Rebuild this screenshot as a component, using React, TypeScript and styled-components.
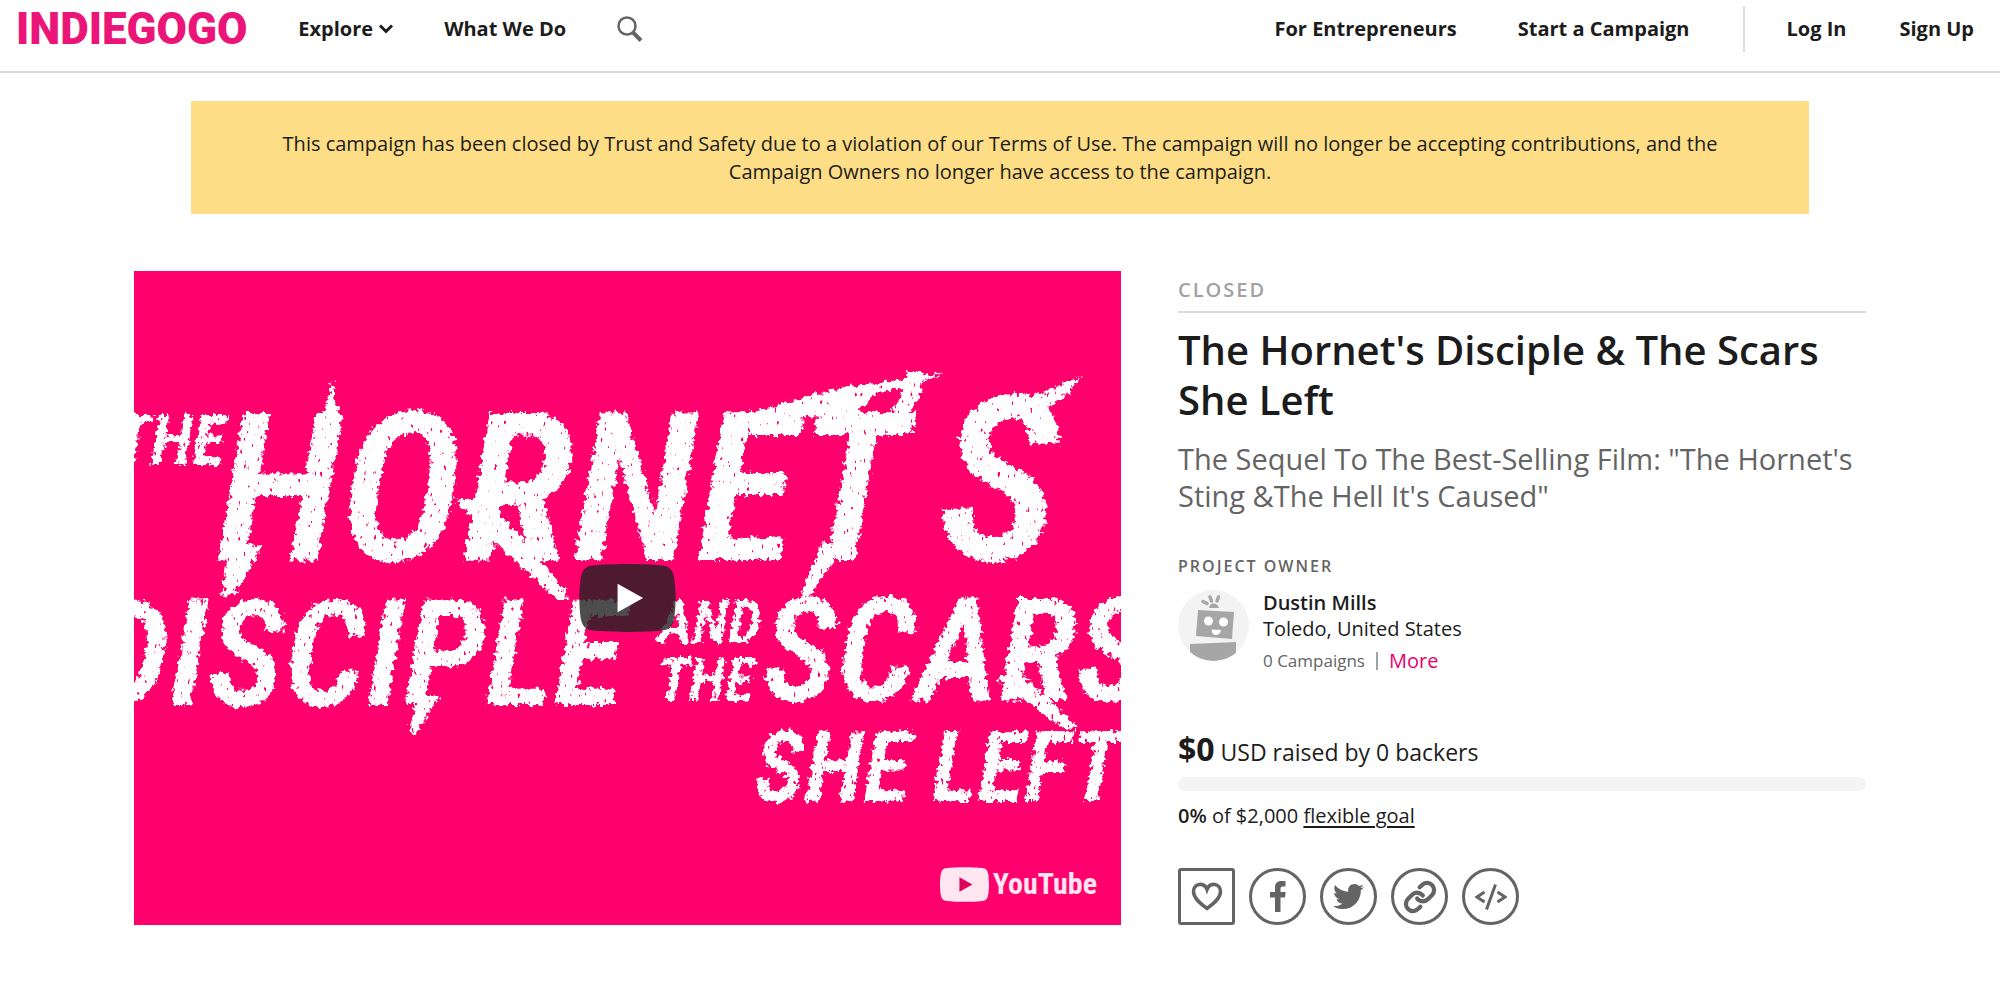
import React from "react";
import styled, { createGlobalStyle, css } from "styled-components";
import { FaTwitter } from "react-icons/fa";
import { Link as LinkIcon } from "lucide-react";

const ink = "#1c1c1c";
const grey = "#646464";
const pink = "#eb1478";
const hotPink = "#ff006c";
const rule = "#dcdcdc";

const GlobalStyle = createGlobalStyle`
  *, *::before, *::after { box-sizing: border-box; }
  body {
    margin: 0;
    background: #fff;
    color: ${ink};
    font-family: "Open Sans", "Noto Sans", sans-serif;
    font-size: 20px;
    line-height: 28px;
  }
  h1, h2, p { margin: 0; font-weight: 400; }
`;

const Header = styled.header`
  display: flex;
  align-items: center;
  justify-content: space-between;
  padding: 0 26px 13px 16px;
  min-height: 73px;
  border-bottom: 2px solid ${rule};
`;

const NavGroup = styled.nav<{ $gap: number }>`
  display: flex;
  align-items: center;
  gap: ${(p) => p.$gap}px;
`;

const Logo = styled.a`
  color: ${pink};
  font: 900 44px/58px Roboto, sans-serif;
  text-decoration: none;
`;

const navItem = css`
  display: flex;
  align-items: center;
  gap: 6px;
  padding: 0;
  border: 0;
  background: none;
  color: ${ink};
  font: inherit;
  font-weight: 700;
  text-decoration: none;
  white-space: nowrap;
`;

const NavLink = styled.a`
  ${navItem}
`;

const NavButton = styled.button`
  ${navItem}
  cursor: pointer;
`;

const Account = styled(NavGroup)`
  min-height: 46px;
  padding-left: 42px;
  border-left: 2px solid ${rule};
`;

const Notice = styled.p`
  width: calc(100% - 48px);
  max-width: 1618px;
  margin: 28px auto 0;
  padding: 29px 60px 28px;
  background: #fddd85;
  text-align: center;
`;

const Campaign = styled.main`
  display: grid;
  grid-template-columns: minmax(0, 987fr) minmax(0, 688fr);
  gap: 57px;
  width: calc(100% - 48px);
  max-width: 1732px;
  margin: 57px auto 56px;
  align-items: start;
`;

const Video = styled.section`
  position: relative;
  aspect-ratio: 987 / 654;
  overflow: hidden;
  background: ${hotPink};
`;

const Artwork = styled.svg`
  display: block;
  width: 100%;
  height: 100%;
  fill: #fff;
  font-family: "Roboto Condensed", "Open Sans Condensed", Roboto, sans-serif;
  font-style: italic;
  font-weight: 600;
`;

const Overlay = styled.div`
  position: absolute;
  inset: 0;
  display: flex;
  align-items: center;
  justify-content: center;
`;

const PlayButton = styled.button`
  width: 97px;
  height: 68px;
  padding: 0;
  border: 0;
  background: none;
  cursor: pointer;
`;

const YouTubeLink = styled.a`
  position: absolute;
  right: 24px;
  bottom: 22px;
  display: flex;
  align-items: center;
  gap: 4px;
  color: #ffe6f0;
  font: 700 30px/38px "Roboto Condensed", Roboto, sans-serif;
  text-decoration: none;
`;

const Status = styled.p`
  padding: 5px 0 7px;
  border-bottom: 2px solid ${rule};
  color: #a2a2a2;
  font-weight: 600;
  letter-spacing: 2px;
`;

const Title = styled.h1`
  margin-top: 12px;
  font-size: 40px;
  font-weight: 600;
  line-height: 50px;
`;

const Tagline = styled.h2`
  margin-top: 15px;
  color: ${grey};
  font-size: 29px;
  font-weight: 400;
  line-height: 37px;
`;

const OwnerHeading = styled.p`
  margin-top: 38px;
  color: ${grey};
  font-size: 16px;
  font-weight: 600;
  letter-spacing: 2px;
`;

const Owner = styled.div`
  display: flex;
  gap: 14px;
  margin-top: 10px;
`;

const OwnerName = styled.p`
  font-weight: 600;
  line-height: 26px;
`;

const Place = styled.p`
  line-height: 26px;
`;

const OwnerMeta = styled.p`
  display: flex;
  align-items: center;
  gap: 11px;
  margin-top: 5px;
  color: ${grey};
  font-size: 17px;
`;

const Bar = styled.span`
  width: 2px;
  height: 18px;
  background: #a2a2a2;
`;

const MoreLink = styled.a`
  color: #e6006e;
  font-size: 20px;
  text-decoration: none;
`;

const Raised = styled.p`
  margin-top: 54px;
  font-size: 23px;
  line-height: 40px;
`;

const Amount = styled.strong`
  font-size: 32px;
  font-weight: 700;
`;

const Meter = styled.div`
  height: 14px;
  margin-top: 5px;
  border-radius: 7px;
  background: #f4f4f4;
`;

const Goal = styled.p`
  margin-top: 11px;

  a { color: inherit; text-underline-offset: 3px; }
  strong { font-weight: 600; }
`;

const Actions = styled.div`
  display: flex;
  gap: 14px;
  margin-top: 38px;
`;

const ActionButton = styled.button<{ $square?: boolean }>`
  display: flex;
  align-items: center;
  justify-content: center;
  width: 57px;
  height: 57px;
  padding: 0;
  border: 3px solid ${grey};
  border-radius: ${(p) => (p.$square ? "3px" : "50%")};
  background: #fff;
  color: ${grey};
  cursor: pointer;
`;

const badge =
  "M66.52 7.74c-.78-2.93-2.49-5.41-5.42-6.19C55.79.13 34 0 34 0S12.21.13 6.9 1.55C3.97 2.33 2.27 4.81 1.48 7.74.06 13.05 0 24 0 24s.06 10.95 1.48 16.26c.78 2.93 2.49 5.41 5.42 6.19C12.21 47.87 34 48 34 48s21.79-.13 27.1-1.55c2.93-.78 4.64-3.26 5.42-6.19C67.94 34.95 68 24 68 24s-.06-10.95-1.48-16.26z";

const words = [
  { text: "THE", x: -20, y: 194, size: 70 },
  { text: "HORNET", x: 82, y: 289, size: 208 },
  { text: "’", x: 746, y: 236, size: 180 },
  { text: "S", x: 804, y: 289, size: 232 },
  { text: "DISCIPLE", x: -46, y: 434, size: 148 },
  { text: "AND", x: 524, y: 372, size: 60 },
  { text: "THE", x: 524, y: 430, size: 60 },
  { text: "SCARS", x: 628, y: 430, size: 144 },
  { text: "SHE", x: 620, y: 530, size: 98 },
  { text: "LEFT", x: 798, y: 530, size: 98 },
];

/* Dry-brush tails that run out of the lettering. */
const tails = [
  "M95 270 L128 275 L102 322 L88 325 Z",
  "M322 230 L350 225 L400 280 L436 328 L424 328 L375 285 Z",
  "M688 270 L712 274 L674 326 L666 326 Z",
  "M610 144 L700 118 L812 102 L775 114 L740 124 L720 146 Z",
  "M186 158 L198 110 L208 158 Z",
  "M880 134 L949 104 L934 122 L896 150 Z",
  "M284 425 L306 425 L280 464 L275 458 Z",
  "M862 408 L884 400 L933 446 L944 456 L930 458 Z",
];

function Thumbnail() {
  return (
    <Artwork viewBox="0 0 987 654" preserveAspectRatio="xMidYMid slice">
      <defs>
        <filter id="brush" x="-5%" y="-5%" width="110%" height="110%">
          <feTurbulence type="fractalNoise" baseFrequency="0.2" numOctaves="3" seed="7" result="edge" />
          <feDisplacementMap in="SourceGraphic" in2="edge" scale="10" xChannelSelector="R" yChannelSelector="G" result="rough" />
          <feTurbulence type="fractalNoise" baseFrequency="0.3 0.14" numOctaves="2" seed="3" result="grain" />
          <feColorMatrix in="grain" type="matrix" values="0 0 0 0 1  0 0 0 0 1  0 0 0 0 1  0 0 0 -14 11" result="holes" />
          <feComposite in="rough" in2="holes" operator="in" />
        </filter>
      </defs>
      <g filter="url(#brush)">
        {words.map((w, i) => (
          <text key={i} x={w.x} y={w.y} fontSize={w.size}>{w.text}</text>
        ))}
        {tails.map((d) => <path key={d} d={d} />)}
      </g>
    </Artwork>
  );
}

function Robot() {
  return (
    <svg width="71" height="71" viewBox="0 0 71 71" aria-hidden="true">
      <defs><clipPath id="disc"><circle cx="35.500" cy="35.500" r="35.500" /></clipPath></defs>
      <g clipPath="url(#disc)">
        <rect width="71" height="71" fill="#f3f3f3" />
        <g fill="#a6a6a6">
          <path d="M20 20 L56 22 L54 49 L18 46 Z" />
          <path d="M12 54 L58 52 V71 H12 Z" />
          <path d="M31 18 Q32 13 36 13.500 Q40 14 41 18 Z" />
        </g>
        <g stroke="#a6a6a6" strokeWidth="3.500" strokeLinecap="round">
          <path d="M25 11.500 L29 13.500 M32 7 L33.500 11 M40.500 7 L39 11" />
        </g>
        <g fill="#fff">
          <circle cx="30.500" cy="31" r="4.500" />
          <circle cx="45.500" cy="32" r="4.500" />
          <path d="M33.500 39.500 L43 40 Q42 45 38 45 Q34 45 33.500 39.500 Z" />
        </g>
      </g>
    </svg>
  );
}

export default function App() {
  return (
    <>
      <GlobalStyle />
      <Header>
        <NavGroup $gap={51}>
          <Logo href="#">INDIEGOGO</Logo>
          <NavButton type="button">
            Explore
            <svg width="14" height="10" viewBox="0 0 14 10" fill="none" stroke="currentColor" strokeWidth="3" aria-hidden="true">
              <path d="M1 1.500 L7 7.500 L13 1.500" />
            </svg>
          </NavButton>
          <NavLink href="#">What We Do</NavLink>
          <NavButton type="button" aria-label="Search">
            <svg width="26" height="26" viewBox="0 0 26 26" fill="none" stroke={grey} aria-hidden="true">
              <circle cx="10" cy="10" r="8.500" strokeWidth="2.500" />
              <path d="M16 16.500 L24 24.500" strokeWidth="4" />
            </svg>
          </NavButton>
        </NavGroup>
        <NavGroup $gap={53}>
          <NavGroup as="div" $gap={61}>
            <NavLink href="#">For Entrepreneurs</NavLink>
            <NavLink href="#">Start a Campaign</NavLink>
          </NavGroup>
          <Account as="div" $gap={53}>
            <NavLink href="#">Log In</NavLink>
            <NavLink href="#">Sign Up</NavLink>
          </Account>
        </NavGroup>
      </Header>

      <Notice>
        This campaign has been closed by Trust and Safety due to a violation of our Terms of Use. The
        campaign will no longer be accepting contributions, and the Campaign Owners no longer have
        access to the campaign.
      </Notice>

      <Campaign>
        <Video>
          <Thumbnail />
          <Overlay>
            <PlayButton type="button" aria-label="Play">
              <svg width="97" height="68" viewBox="0 0 68 48" aria-hidden="true">
                <path d={badge} fill="#212121" fillOpacity="0.8" />
                <path d="M45 24 L27 14 V34 Z" fill="#fff" />
              </svg>
            </PlayButton>
          </Overlay>
          <YouTubeLink href="#">
            <svg width="49" height="35" viewBox="0 0 68 48" aria-hidden="true">
              <path d={badge} fill="#ffe6f0" />
              <path d="M45 24 L27 14 V34 Z" fill="#e0005f" />
            </svg>
            YouTube
          </YouTubeLink>
        </Video>

        <section>
          <Status>CLOSED</Status>
          <Title>The Hornet's Disciple &amp; The Scars She Left</Title>
          <Tagline>The Sequel To The Best-Selling Film: "The Hornet's Sting &amp;The Hell It's Caused"</Tagline>

          <OwnerHeading>PROJECT OWNER</OwnerHeading>
          <Owner>
            <Robot />
            <div>
              <OwnerName>Dustin Mills</OwnerName>
              <Place>Toledo, United States</Place>
              <OwnerMeta>
                0 Campaigns <Bar /> <MoreLink href="#">More</MoreLink>
              </OwnerMeta>
            </div>
          </Owner>

          <Raised><Amount>$0</Amount> USD raised by 0 backers</Raised>
          <Meter role="progressbar" aria-valuenow={0} aria-valuemin={0} aria-valuemax={100} aria-label="Funding" />
          <Goal><strong>0%</strong> of $2,000 <a href="#">flexible goal</a></Goal>

          <Actions>
            <ActionButton type="button" $square aria-label="Follow">
              <svg width="32" height="29" viewBox="0 0 32 29" fill="none" stroke="currentColor" strokeWidth="3.500" aria-hidden="true">
                <path d="M16 26.500 C11 22.500 2.500 17 2.500 9.500 C2.500 1.500 13 -0.500 16 7.500 C19 -0.500 29.500 1.500 29.500 9.500 C29.500 17 21 22.500 16 26.500 Z" />
              </svg>
            </ActionButton>
            <ActionButton type="button" aria-label="Share on Facebook">
              <svg width="16" height="31" viewBox="0 0 16 31" fill="currentColor" aria-hidden="true">
                <path d="M5 31 V16.500 H0 V11 H5 V6.500 C5 2 7.500 0 11.500 0 H15.500 V5.500 H13 C11 5.500 10.500 6.300 10.500 8 V11 H15.700 L15 16.500 H10.500 V31 Z" />
              </svg>
            </ActionButton>
            <ActionButton type="button" aria-label="Share on Twitter">
              <FaTwitter size={31} />
            </ActionButton>
            <ActionButton type="button" aria-label="Copy link">
              <LinkIcon size={34} strokeWidth={3} />
            </ActionButton>
            <ActionButton type="button" aria-label="Embed">
              <svg width="32" height="26" viewBox="0 0 32 26" fill="none" stroke="currentColor" strokeWidth="3" aria-hidden="true">
                <path d="M9.500 8 L2 13 L9.500 18 M22.500 8 L30 13 L22.500 18 M20.500 0.500 L11.500 25.500" />
              </svg>
            </ActionButton>
          </Actions>
        </section>
      </Campaign>
    </>
  );
}
